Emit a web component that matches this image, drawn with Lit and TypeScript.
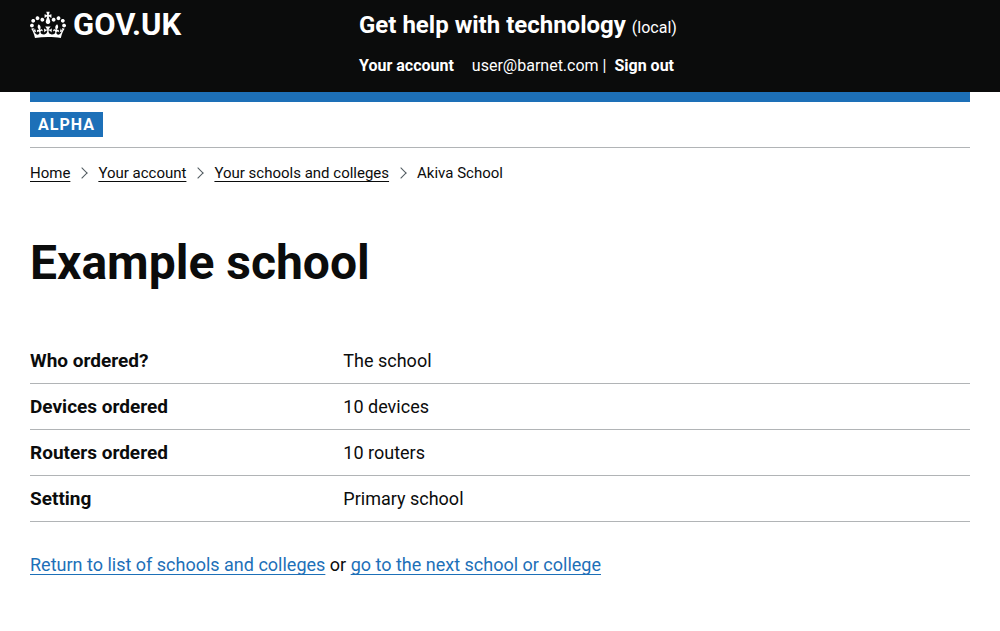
import { LitElement, html, css } from "lit";
import { customElement } from "lit/decorators.js";

interface SummaryRow {
  key: string;
  value: string;
}

const rows: SummaryRow[] = [
  { key: "Who ordered?", value: "The school" },
  { key: "Devices ordered", value: "10 devices" },
  { key: "Routers ordered", value: "10 routers" },
  { key: "Setting", value: "Primary school" },
];

const ancestors: string[] = ["Home", "Your account", "Your schools and colleges"];

@customElement("app-root")
export class AppRoot extends LitElement {
  static styles = css`
    :host {
      display: block;
      font-family: Roboto, "Liberation Sans", sans-serif;
      font-size: 18px;
      line-height: 25px;
      color: #0b0c0c;
      background: #fff;
    }
    a {
      color: #1d70b8;
      text-decoration: underline;
      text-decoration-thickness: 1px;
      text-decoration-skip-ink: none;
      text-underline-offset: 3px;
    }
    .container { margin: 0 30px; }
    .header { background: #0b0c0c; color: #fff; }
    .header a { color: #fff; text-decoration: none; }
    .header-row {
      display: grid;
      grid-template-columns: 35% 1fr;
      padding: 10px 0 14px;
    }
    .logo {
      display: flex;
      align-items: center;
      gap: 7px;
      height: 30px;
      font-size: 31px;
      line-height: 30px;
      font-weight: 700;
    }
    .logo svg { display: block; fill: currentColor; }
    .service { font-size: 24px; line-height: 30px; font-weight: 700; }
    .env { font-size: 16px; font-weight: 400; }
    .nav {
      display: flex;
      flex-wrap: wrap;
      margin-top: 13px;
      font-size: 16px;
      line-height: 25px;
      white-space: pre;
    }
    .service + .nav { margin-top: 10px; }
    .nav a { font-weight: 700; }
    .user { margin-left: 18px; }
    .bar { height: 10px; background: #1d70b8; }
    .phase { display: flex; padding: 10px 0; border-bottom: 1px solid #b1b4b6; }
    .tag {
      padding: 0 8px;
      background: #1d70b8;
      color: #fff;
      font-size: 16px;
      font-weight: 700;
      letter-spacing: 1px;
    }
    .crumbs {
      display: flex;
      flex-wrap: wrap;
      list-style: none;
      margin: 15px 0 0;
      padding: 0;
      font-size: 15px;
      line-height: 20px;
    }
    .crumbs li { display: flex; align-items: center; }
    .crumbs li + li::before {
      content: "";
      width: 8px;
      height: 8px;
      margin: 0 12px 0 8px;
      box-sizing: border-box;
      border: solid #505a5f;
      border-width: 1px 1px 0 0;
      transform: rotate(45deg);
    }
    .crumbs a { color: #0b0c0c; }
    h1 { margin: 55px 0 50px; font-size: 48px; line-height: 50px; font-weight: 700; }
    .summary { margin: 0 0 30px; }
    .row {
      display: grid;
      grid-template-columns: 1fr 2fr;
      padding: 10px 0;
      border-bottom: 1px solid #b1b4b6;
    }
    dt { font-size: 19px; font-weight: 700; }
    dd { margin: 0; }
    p { margin: 0; }
  `;

  render() {
    return html`
      <header class="header">
        <div class="container header-row">
          <a class="logo" href="#">
            <svg width="36" height="28" viewBox="0 0 132 97" aria-hidden="true">
              <path fill-rule="evenodd" d="M25 30.2c3.5 1.5 7.7-.2 9.1-3.7 1.5-3.6-.2-7.8-3.9-9.2-3.6-1.4-7.6.3-9.1 3.9-1.4 3.5.3 7.5 3.9 9zM9 39.5c3.6 1.5 7.8-.2 9.2-3.7 1.5-3.6-.2-7.8-3.9-9.1-3.6-1.5-7.6.2-9.1 3.8-1.4 3.5.3 7.5 3.8 9zM4.4 57.2c3.5 1.5 7.7-.2 9.1-3.8 1.5-3.6-.2-7.7-3.9-9.1-3.5-1.5-7.6.3-9.1 3.8-1.4 3.5.3 7.6 3.9 9.1zm38.3-21.4c3.5 1.5 7.7-.2 9.1-3.8 1.5-3.6-.2-7.7-3.9-9.1-3.6-1.5-7.6.3-9.1 3.8-1.3 3.6.4 7.7 3.9 9.1zm64.4-5.6c-3.6 1.5-7.8-.2-9.1-3.7-1.5-3.6.2-7.8 3.8-9.2 3.6-1.4 7.7.3 9.2 3.9 1.3 3.5-.4 7.5-3.9 9zm15.9 9.3c-3.6 1.5-7.7-.2-9.1-3.7-1.5-3.6.2-7.8 3.7-9.1 3.6-1.5 7.7.2 9.2 3.8 1.5 3.5-.3 7.5-3.8 9zm4.7 17.7c-3.6 1.5-7.8-.2-9.2-3.8-1.5-3.6.2-7.7 3.9-9.1 3.6-1.5 7.7.3 9.2 3.8 1.3 3.5-.4 7.6-3.9 9.1zM89.3 35.8c-3.6 1.5-7.8-.2-9.2-3.8-1.4-3.6.2-7.7 3.9-9.1 3.6-1.5 7.7.3 9.2 3.8 1.4 3.6-.3 7.7-3.9 9.1zM69.7 17.7l8.9 4.7V9.3l-8.9 2.8c-.2-.3-.5-.6-.9-.9L72.4 0H59.6l3.5 11.2c-.3.3-.6.5-.9.9l-8.8-2.8v13.1l8.8-4.7c.3.3.6.7.9.9l-5 15.4v.1c-.2.8-.4 1.6-.4 2.4 0 4.1 3.1 7.5 7 8.1h.2c.3 0 .7.1 1 .1.4 0 .7 0 1-.1h.2c4-.6 7.1-4.1 7.1-8.1 0-.8-.1-1.7-.4-2.4V34l-5.1-15.4c.4-.2.7-.6 1-.9zM66 92.8c16.9 0 32.8 1.1 47.1 3.2 4-16.9 8.9-26.7 14-33.5l-9.6-3.4c1 4.9 1.1 7.2 0 10.2-1.5-1.4-3-4.3-4.2-8.7L108.6 76c2.8-2 5-3.2 7.5-3.3-4.4 9.4-10 11.9-13.6 11.2-4.3-.8-6.3-4.6-5.6-7.9 1-4.7 5.7-5.9 8-.5 4.3-8.7-3-11.4-7.6-8.8 7.1-7.2 7.9-13.5 2.1-21.1-8 6.1-8.1 12.3-4.5 20.8-4.7-5.4-12.1-2.5-9.5 6.2 3.4-5.2 7.9-2 7.2 3.1-.6 4.3-6.4 7.8-13.5 7.2-10.3-.9-10.9-8-11.2-13.8 2.5-.5 7.1 1.8 11 7.3L80.2 60c-4.1 4.4-8 5.3-12.3 5.4 1.4-4.4 8-11.6 8-11.6H55.5s6.4 7.2 7.9 11.6c-4.2-.1-8-1-12.3-5.4l1.4 16.4c3.9-5.5 8.5-7.7 10.9-7.3-.3 5.8-.9 12.8-11.1 13.8-7.2.6-12.9-2.9-13.5-7.2-.7-5 3.8-8.3 7.1-3.1 2.7-8.7-4.6-11.6-9.4-6.2 3.7-8.5 3.6-14.7-4.6-20.8-5.8 7.6-5 13.9 2.2 21.1-4.7-2.6-11.9.1-7.7 8.8 2.3-5.5 7.1-4.2 8.1.5.7 3.3-1.3 7.1-5.7 7.9-3.5.7-9-1.8-13.5-11.2 2.5.1 4.7 1.3 7.5 3.3l-4.7-15.4c-1.2 4.4-2.7 7.2-4.3 8.7-1.1-3-.9-5.3 0-10.2l-9.5 3.4c5 6.9 9.9 16.7 14 33.5 14.8-2.1 30.8-3.2 47.7-3.2z"/>
            </svg>
            <span>GOV.UK</span>
          </a>
          <div>
            <div class="service">Get help with technology <span class="env">(local)</span></div>
            <nav class="nav" aria-label="Account"><a href="#">Your account</a><span class="user">user@barnet.com | </span><a href="#"> Sign out</a></nav>
          </div>
        </div>
      </header>
      <div class="container">
        <div class="bar"></div>
        <div class="phase"><strong class="tag">ALPHA</strong></div>
        <nav aria-label="Breadcrumb">
          <ol class="crumbs">
            ${ancestors.map((text) => html`<li><a href="#">${text}</a></li>`)}
            <li>Akiva School</li>
          </ol>
        </nav>
        <main>
          <h1>Example school</h1>
          <dl class="summary">
            ${rows.map((r) => html`<div class="row"><dt>${r.key}</dt><dd>${r.value}</dd></div>`)}
          </dl>
          <p><a href="#">Return to list of schools and colleges</a> or <a href="#">go to the next school or college</a></p>
        </main>
      </div>
    `;
  }
}
